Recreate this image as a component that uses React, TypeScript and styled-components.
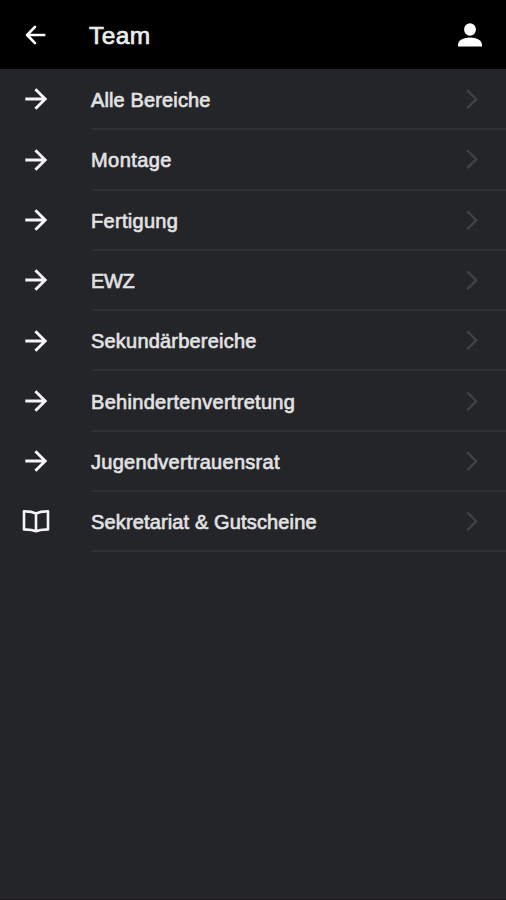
import React from "react";
import styled, { createGlobalStyle } from "styled-components";

const GlobalStyle = createGlobalStyle`
  * { box-sizing: border-box; }
  body {
    margin: 0;
    background: #242529;
    font-family: "Liberation Sans", Arial, sans-serif;
  }
`;

const Screen = styled.div`
  display: flex;
  flex-direction: column;
  width: 100%;
  height: 900px;
  overflow: hidden;
  background: #242529;
  border-bottom: 1px solid #1f1a20;
`;

const Header = styled.header`
  display: flex;
  align-items: center;
  flex: none;
  height: 69px;
  padding: 1px 23px 0 22px;
  background: #000;
`;

const Title = styled.h1`
  flex: 1;
  margin: 2px 0 0 39px;
  font-size: 24.5px;
  font-weight: 400;
  line-height: 30px;
  letter-spacing: 0.4px;
  color: #ececec;
  -webkit-text-stroke: 0.7px #ececec;
`;

const IconButton = styled.button`
  display: flex;
  flex: none;
  padding: 0;
  border: 0;
  background: none;
  color: #fff;
`;

const List = styled.ul`
  margin: 0;
  padding: 1px 0 0;
  list-style: none;
`;

const Row = styled.li`
  display: flex;
  height: 60.3px;
`;

const Leading = styled.span`
  display: flex;
  align-items: center;
  flex: none;
  width: 92px;
  padding: 0 0 1.5px 22px;
  color: #f4f4f4;
`;

const Content = styled.span`
  display: flex;
  align-items: center;
  justify-content: space-between;
  flex: 1;
  padding: 0 27px 0 0;
  border-bottom: 2px solid #2f3034;
  color: #424347;
`;

const Label = styled.span<{ $tracking: number }>`
  margin: 2px 0 0 -1px;
  font-size: 20px;
  line-height: 24px;
  letter-spacing: ${(p) => p.$tracking}px;
  white-space: nowrap;
  color: #e2e2e3;
  -webkit-text-stroke: 0.65px #e2e2e3;
`;

const Line = styled.svg`
  display: block;
  fill: none;
  stroke: currentColor;
`;

const ArrowLeft = () => (
  <Line width="28" height="28" viewBox="0 0 28 28" strokeWidth="2.7" strokeLinecap="round" strokeLinejoin="round">
    <path d="M22.2 14H5.5M13 5.9 5.1 14l7.9 8.1" />
  </Line>
);

const ArrowRight = () => (
  <Line width="28" height="28" viewBox="0 0 28 28" strokeWidth="2.9" strokeLinejoin="miter">
    <path d="M3.3 14H23M13.4 4.2 23.2 14l-9.8 9.8" />
  </Line>
);

const Book = () => (
  <Line width="28" height="28" viewBox="0 0 28 28" strokeWidth="2.6" strokeLinejoin="round">
    <path d="M14 6.4 9.5 4.9 2 4.2v18.2l7.5.6L14 24.3l4.5-1.3 7.5-.6V4.200l-7.500.7zM14 6.400v17.900" />
  </Line>
);

const Chevron = () => (
  <Line width="14" height="22" viewBox="0 0 14 22" strokeWidth="2.3">
    <path d="M2.2 2.200 11.200 11.200 2.200 20.200" />
  </Line>
);

const Person = () => (
  <svg width="26" height="26" viewBox="0 0 26 26" fill="currentColor">
    <ellipse cx="13" cy="7.5" rx="5.9" ry="6.2" />
    <path d="M1 24.5v-1.700C1 18.400 6.300 15.500 13 15.500s12 2.900 12 7.300v1.700z" />
  </svg>
);

const entries = [
  { label: "Alle Bereiche", tracking: 0.13 },
  { label: "Montage", tracking: 0.43 },
  { label: "Fertigung", tracking: 0.3 },
  { label: "EWZ", tracking: -0.3 },
  { label: "Sekundärbereiche", tracking: 0.2 },
  { label: "Behindertenvertretung", tracking: 0.3 },
  { label: "Jugendvertrauensrat", tracking: 0.28 },
  { label: "Sekretariat & Gutscheine", tracking: 0.14, book: true },
];

export default function App() {
  return (
    <>
      <GlobalStyle />
      <Screen>
        <Header>
          <IconButton aria-label="Zurück"><ArrowLeft /></IconButton>
          <Title>Team</Title>
          <IconButton aria-label="Profil"><Person /></IconButton>
        </Header>
        <List>
          {entries.map((e) => (
            <Row key={e.label}>
              <Leading>{e.book ? <Book /> : <ArrowRight />}</Leading>
              <Content>
                <Label $tracking={e.tracking}>{e.label}</Label>
                <Chevron />
              </Content>
            </Row>
          ))}
        </List>
      </Screen>
    </>
  );
}
